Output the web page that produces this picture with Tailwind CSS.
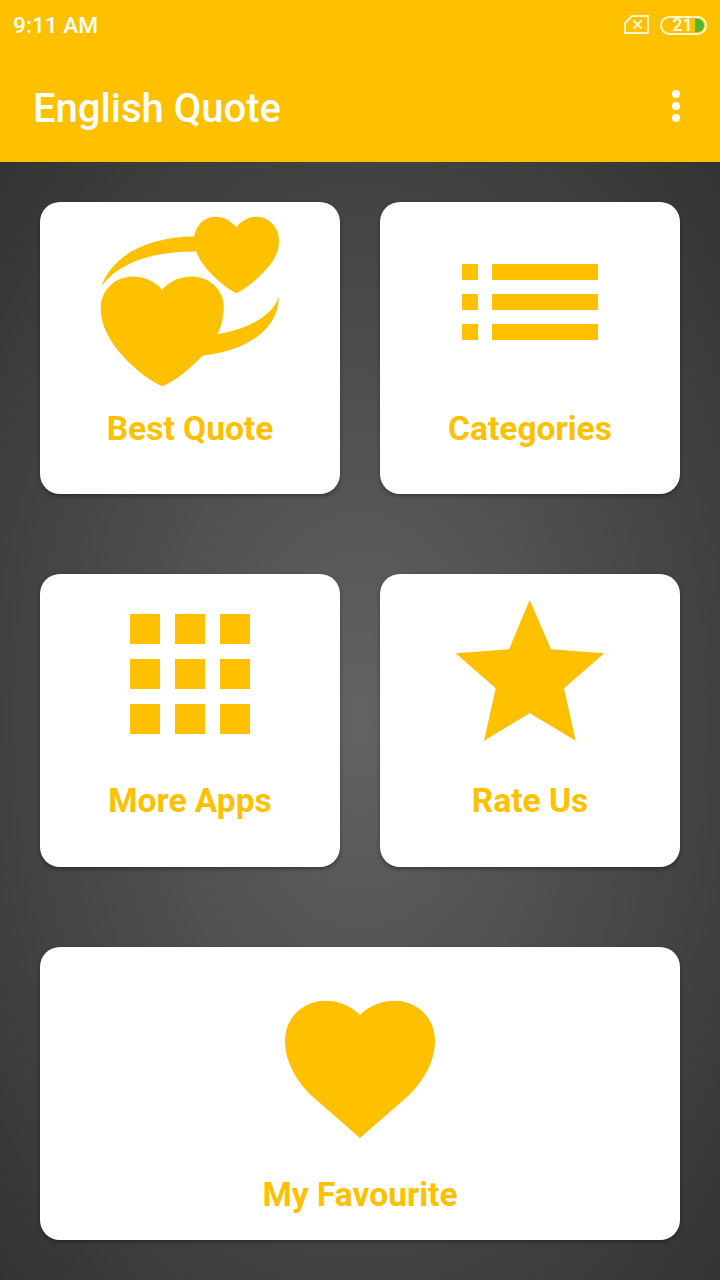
<!DOCTYPE html>
<html lang="en">

<head>
    <meta charset="UTF-8">
    <meta name="viewport" content="width=device-width, initial-scale=1.0">
    <title>English Quote</title>
    <script src="https://cdn.jsdelivr.net/npm/@tailwindcss/browser@4"></script>
</head>

<body class="w-[720px] h-[1280px] overflow-hidden flex flex-col font-['Roboto',sans-serif] bg-[#333333]">

    <!-- App bar -->
    <header class="h-[162px] shrink-0 bg-[#ffc000] text-white">
        <div class="h-[50px] flex items-center justify-between pl-[13px] pr-[13px]">
            <span class="text-[22.7px] font-medium pt-[3px]">9:11 AM</span>
            <div class="flex items-center gap-[11px]">
                <svg width="25" height="20" viewBox="0 0 25 20" fill="none" stroke="#fff6d0" stroke-width="1.8">
                    <path d="M1 8L8 1H24V18H1Z" />
                    <path d="M9.5 5.5L17.5 13.5M17.5 5.5L9.5 13.5" stroke-width="2" />
                </svg>
                <div class="relative w-[47px] h-[19px] rounded-full border-2 border-[#fff6d0] flex items-center justify-center overflow-hidden">
                    <span class="text-[18px] leading-none font-bold text-[#fff6d0] pr-[2px]">21</span>
                    <div class="absolute right-[1px] top-[1px] w-[9px] h-[13px] rounded-r-full bg-[#4cb82c]"></div>
                </div>
            </div>
        </div>
        <div class="h-[112px] flex items-center justify-between pl-[33px] pr-[40px] pt-[6px]">
            <h1 class="text-[40px] font-medium leading-none">English Quote</h1>
            <div class="flex flex-col gap-[4px] mb-[6px]">
                <div class="w-[8px] h-[8px] rounded-full bg-white"></div>
                <div class="w-[8px] h-[8px] rounded-full bg-white"></div>
                <div class="w-[8px] h-[8px] rounded-full bg-white"></div>
            </div>
        </div>
    </header>

    <!-- Menu cards -->
    <main class="flex-1 px-[40px] pt-[40px] flex flex-col gap-[80px] bg-[radial-gradient(ellipse_at_center,#636363_0%,#333333_100%)]">
        <div class="grid grid-cols-2 gap-[40px]">
            <div class="h-[292px] bg-white rounded-[20px] shadow-[0_2px_4px_rgba(0,0,0,0.35)] flex flex-col items-center">
                <svg class="mt-[11px] ml-[3px]" width="183" height="177" viewBox="60 40 550 530" fill="#ffc000">
                    <path d="M65 258C95 170 200 110 345 110L350 155C220 155 120 185 65 258Z" />
                    <path d="M598 290C596 390 500 460 340 470L400 405C500 392 578 350 598 290Z" />
                    <path d="M470 82C452 62 432 50 408 50C372 50 343 80 343 118C343 160 365 192 395 222C420 248 445 268 470 280C495 268 525 245 552 216C580 187 598 160 598 122C598 82 568 50 530 50C505 50 485 62 470 82Z" />
                    <path d="M247 270C225 245 195 230 158 230C105 230 62 272 62 325C62 380 92 428 130 470C165 508 205 540 247 560C290 540 330 508 365 470C405 428 432 380 432 322C432 272 390 230 335 230C300 230 268 245 247 270Z" />
                </svg>
                <span class="mt-auto mb-[45px] text-[33.5px] leading-[40px] font-bold text-[#ffc000]">Best Quote</span>
            </div>
            <div class="h-[292px] bg-white rounded-[20px] shadow-[0_2px_4px_rgba(0,0,0,0.35)] flex flex-col items-center">
                <svg class="mt-[62px]" width="136" height="76" viewBox="0 0 136 76" fill="#ffc000">
                    <rect x="0" y="0" width="16" height="16" />
                    <rect x="30" y="0" width="106" height="16" />
                    <rect x="0" y="30" width="16" height="16" />
                    <rect x="30" y="30" width="106" height="16" />
                    <rect x="0" y="60" width="16" height="16" />
                    <rect x="30" y="60" width="106" height="16" />
                </svg>
                <span class="mt-auto mb-[45px] text-[33.5px] leading-[40px] font-bold text-[#ffc000]">Categories</span>
            </div>
        </div>

        <div class="grid grid-cols-2 gap-[40px]">
            <div class="h-[293px] bg-white rounded-[20px] shadow-[0_2px_4px_rgba(0,0,0,0.35)] flex flex-col items-center">
                <div class="mt-[40px] grid grid-cols-3 gap-[15px]">
                    <div class="w-[30px] h-[30px] bg-[#ffc000]"></div>
                    <div class="w-[30px] h-[30px] bg-[#ffc000]"></div>
                    <div class="w-[30px] h-[30px] bg-[#ffc000]"></div>
                    <div class="w-[30px] h-[30px] bg-[#ffc000]"></div>
                    <div class="w-[30px] h-[30px] bg-[#ffc000]"></div>
                    <div class="w-[30px] h-[30px] bg-[#ffc000]"></div>
                    <div class="w-[30px] h-[30px] bg-[#ffc000]"></div>
                    <div class="w-[30px] h-[30px] bg-[#ffc000]"></div>
                    <div class="w-[30px] h-[30px] bg-[#ffc000]"></div>
                </div>
                <span class="mt-auto mb-[46px] text-[33.5px] leading-[40px] font-bold text-[#ffc000]">More Apps</span>
            </div>
            <div class="h-[293px] bg-white rounded-[20px] shadow-[0_2px_4px_rgba(0,0,0,0.35)] flex flex-col items-center">
                <svg class="mt-[25px]" width="150" height="143" viewBox="455 599 150 143" fill="#ffc000">
                    <path d="M529.7 600L551 649.3L604.3 653.3L564 688.3L575.7 740.7L529.7 713.3L484 740.7L495.7 688.3L455.7 653.3L509 649.3Z" />
                </svg>
                <span class="mt-auto mb-[46px] text-[33.5px] leading-[40px] font-bold text-[#ffc000]">Rate Us</span>
            </div>
        </div>

        <div class="h-[293px] bg-white rounded-[20px] shadow-[0_2px_4px_rgba(0,0,0,0.35)] flex flex-col items-center">
            <svg class="mt-[53px]" width="150" height="138" viewBox="285 1000 150 138" fill="#ffc000">
                <path d="M360 1015C350 1005 338 1000.7 325 1000.7C303 1000.7 285 1018 285 1041C285 1062 297 1082 313 1097L360 1138L407 1097C423 1082 435 1062 435 1041C435 1018 417 1000.7 395 1000.7C382 1000.7 370 1005 360 1015Z" />
            </svg>
            <span class="mt-auto mb-[25px] text-[33.5px] leading-[40px] font-bold text-[#ffc000]">My Favourite</span>
        </div>
    </main>

</body>

</html>
